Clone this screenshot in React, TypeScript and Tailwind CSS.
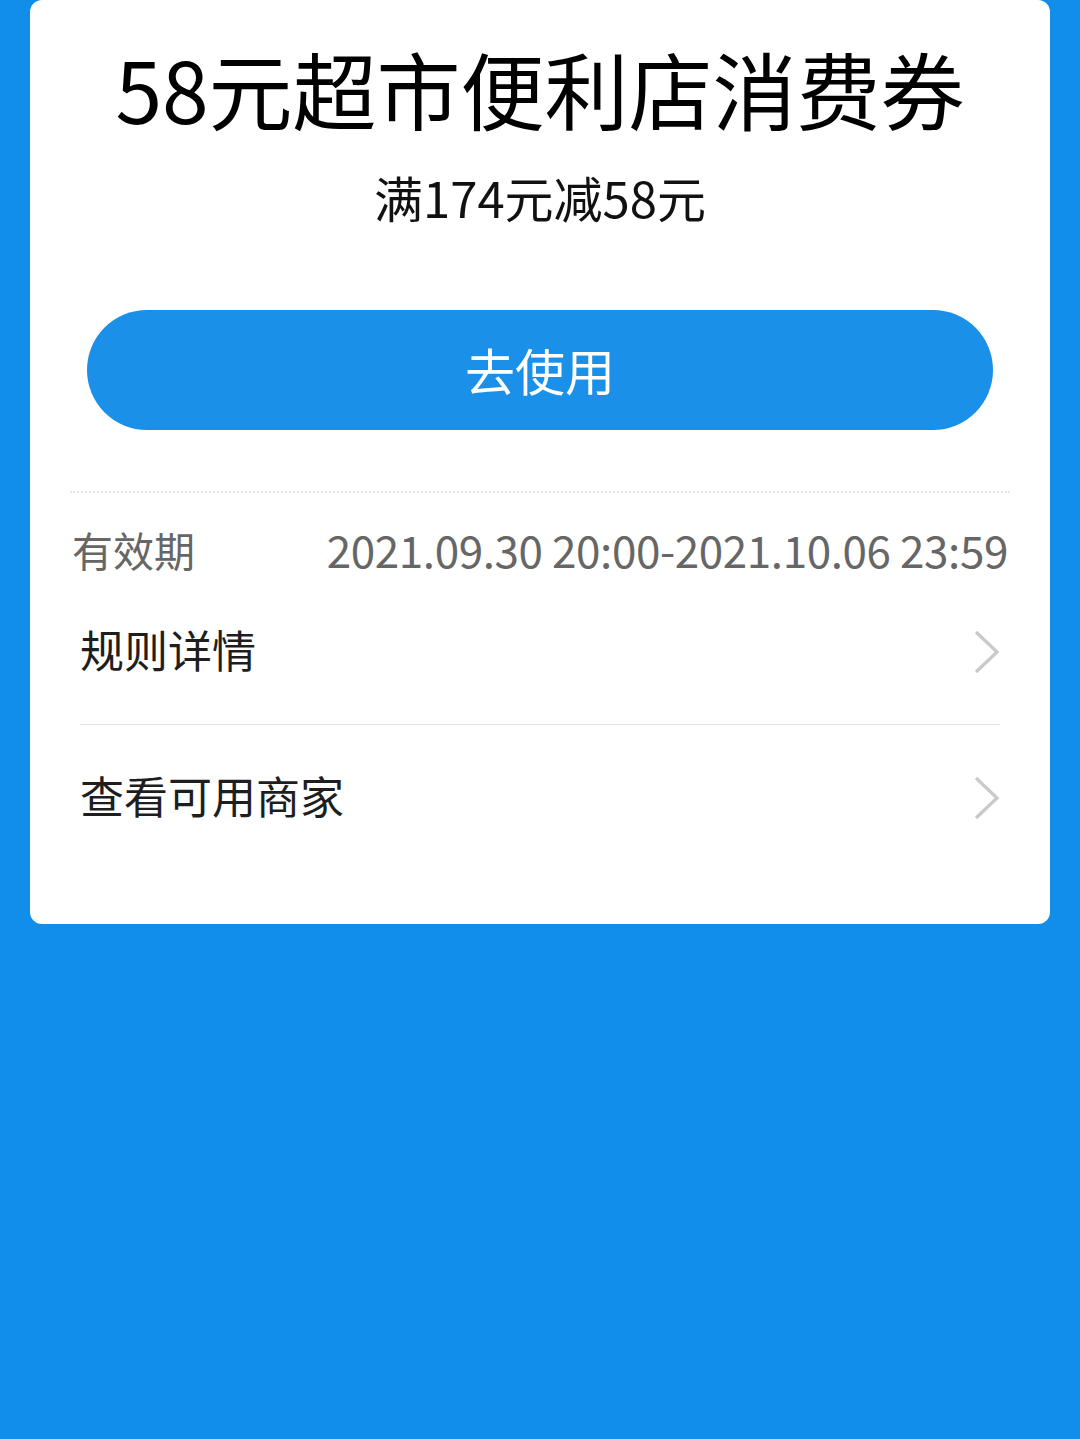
import React from "react";

const font = { fontFamily: '"Noto Sans CJK SC", "Noto Sans", sans-serif' };

function Chevron() {
  return (
    <svg width="26" height="44" viewBox="0 0 26 44" className="shrink-0">
      <polyline points="2,2 23,22 2,42" fill="none" stroke="#c9c9c9" strokeWidth="3.2" />
    </svg>
  );
}

function Row({ label, last }: { label: string; last?: boolean }) {
  return (
    <div
      className={
        "mx-[50px] flex h-[146px] items-center justify-between " +
        (last ? "" : "border-b border-[#e2e2e2]")
      }
    >
      <span className="-mt-[6px] text-[44px] leading-none text-[#1e1e1e]">{label}</span>
      <Chevron />
    </div>
  );
}

export default function App() {
  return (
    <div className="min-h-[1439px] bg-[#118ee9] px-[30px]" style={font}>
      <div className="rounded-[12px] bg-white pb-[53px]">
        <div className="pt-[46px] text-center text-[84px] leading-[84px] text-black">
          58元超市便利店消费券
        </div>
        <div className="mt-[42px] text-center text-[49px] leading-[49px] text-[#111]">
          满174元减58元
        </div>
        <div className="mx-[57px] mt-[89px] flex h-[120px] items-center justify-center rounded-full bg-[#1a90e8] text-[50px] text-white">
          <span className="-mt-[2px]">去使用</span>
        </div>
        <div className="mx-[40px] mt-[61px] border-t-2 border-dotted border-[#e6e6e6]" />
        <div className="mx-[42px] mt-[35px] flex h-[42px] items-center justify-between text-[#666]">
          <span className="text-[41px] leading-none">有效期</span>
          <span className="text-[44px] leading-none tracking-[-0.4px]">
            2021.09.30 20:00-2021.10.06 23:59
          </span>
        </div>
        <div className="mt-[9px]">
          <Row label="规则详情" />
          <Row label="查看可用商家" last />
        </div>
      </div>
    </div>
  );
}
